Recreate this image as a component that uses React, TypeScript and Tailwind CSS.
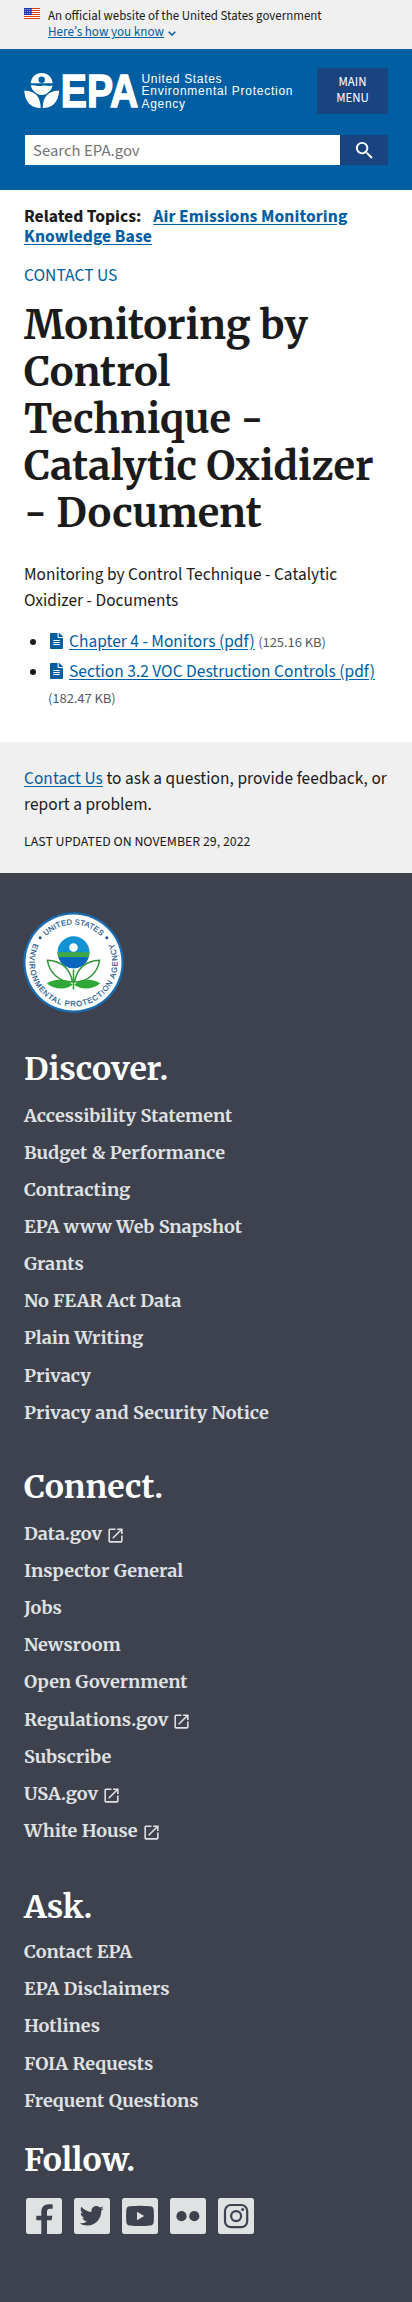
import React from "react";
import { FaFileAlt, FaTwitter } from "react-icons/fa";
import { MdOpenInNew, MdSearch } from "react-icons/md";

type FooterLink = { label: string; external?: boolean };

const discover: FooterLink[] = [
  { label: "Accessibility Statement" },
  { label: "Budget & Performance" },
  { label: "Contracting" },
  { label: "EPA www Web Snapshot" },
  { label: "Grants" },
  { label: "No FEAR Act Data" },
  { label: "Plain Writing" },
  { label: "Privacy" },
  { label: "Privacy and Security Notice" },
];

const connect: FooterLink[] = [
  { label: "Data.gov", external: true },
  { label: "Inspector General" },
  { label: "Jobs" },
  { label: "Newsroom" },
  { label: "Open Government" },
  { label: "Regulations.gov", external: true },
  { label: "Subscribe" },
  { label: "USA.gov", external: true },
  { label: "White House", external: true },
];

const ask: FooterLink[] = [
  { label: "Contact EPA" },
  { label: "EPA Disclaimers" },
  { label: "Hotlines" },
  { label: "FOIA Requests" },
  { label: "Frequent Questions" },
];

function Flag() {
  const stripes = [0, 2, 4, 6, 8, 10];
  const stars = [1.2, 3.2, 5.2, 7.2];
  return (
    <svg className="h-[11px] w-4 shrink-0" viewBox="0 0 16 11">
      <rect width="16" height="11" fill="#fff" />
      {stripes.map((y) => (
        <rect key={y} y={y} width="16" height="1" fill="#db3e1f" />
      ))}
      <rect width="8" height="7" fill="#1e33b1" />
      {stars.map((x) => (
        <g key={x} fill="#fff">
          <rect x={x - 0.4} y="1" width="0.8" height="0.8" />
          <rect x={x - 0.4} y="3" width="0.8" height="0.8" />
          <rect x={x - 0.4} y="5" width="0.8" height="0.8" />
        </g>
      ))}
    </svg>
  );
}

function Logo() {
  return (
    <svg className="mt-5 h-[42px] w-[272px] overflow-visible" viewBox="0 0 272 42" fill="#fff">
      <path
        fillRule="evenodd"
        d="M6.700 14.300C7.200 8 12 4 17.700 4s10.500 4 11 10.300zM17.700 7.600a3.200 3.200 0 1 0 0 6.400 3.200 3.200 0 0 0 0-6.400z"
      />
      <path d="M6.900 16.500c3.600-.9 7.200 1.300 10.800.4 3.600-.9 7.200.8 10.800-.4-.8 4.500-5 9.500-10.800 9.500S7.700 21 6.900 16.500z" />
      <path d="M-.4 20.800c9.500 0 17.800 4.500 17.700 18.800C7.500 40 .1 34.500-.4 20.800z" stroke="#005ea2" strokeWidth="1.200" />
      <path d="M35.800 20.800c-9.500 0-17.800 4.500-17.700 18.800C27.900 40 35.300 34.500 35.800 20.800z" stroke="#005ea2" strokeWidth="1.200" />
      <text
        x="36.800"
        y="38.200"
        className="font-['Liberation_Sans',Arial,sans-serif] font-bold"
        fontSize="47"
        textLength="77.500"
        lengthAdjust="spacingAndGlyphs"
        stroke="#fff"
        strokeWidth="1.500"
      >
        EPA
      </text>
      <g className="font-['Liberation_Sans',Arial,sans-serif]" fontSize="12">
        <text x="117.500" y="13.500" textLength="80">United States</text>
        <text x="117.500" y="26.200" textLength="151">Environmental Protection</text>
        <text x="117.500" y="38.900" textLength="43.500">Agency</text>
      </g>
    </svg>
  );
}

function Seal() {
  return (
    <svg className="h-[103px] w-[103px]" viewBox="0 0 103 103">
      <defs>
        <path id="seal-top" d="M13.500 51.500a38 38 0 0 1 76 0" />
        <path id="seal-bottom" d="M11.900 32.200A44 44 0 1 0 91.100 32.200" />
      </defs>
      <circle cx="51.500" cy="51.500" r="50.300" fill="#1a6cb0" />
      <circle cx="51.500" cy="51.500" r="48" fill="#fff" />
      <g className="font-['Liberation_Sans',Arial,sans-serif]" fontSize="7.600" fill="#1b5690" stroke="#1b5690" strokeWidth=".2">
        <text textAnchor="middle" textLength="61">
          <textPath href="#seal-top" startOffset="50%" textLength="61">UNITED STATES</textPath>
        </text>
        <text textAnchor="middle" textLength="177">
          <textPath href="#seal-bottom" startOffset="50%" textLength="177">ENVIRONMENTAL PROTECTION AGENCY</textPath>
        </text>
      </g>
      <circle cx="18.200" cy="26.800" r="1.500" fill="#1b5690" />
      <circle cx="84.800" cy="26.800" r="1.500" fill="#1b5690" />
      <circle cx="51.500" cy="41.200" r="16" fill="#1192d3" />
      <path d="M35.500 41.200h32a16 16 0 0 1-.8 5H36.300a16 16 0 0 1-.8-5z" fill="#41a843" />
      <path d="M36.300 46.200h30.400a16 16 0 0 1-30.400 0z" fill="#0a66bd" />
      <circle cx="51.500" cy="36.500" r="4.300" fill="#fff" />
      <g fill="#fff" stroke="#35943b" strokeWidth="1.500">
        <path d="M25.400 49.300c11 .5 22 6 25.200 21.700C36 71 27.500 61 25.400 49.300z" />
        <path d="M77.600 49.300c-11 .5-22 6-25.200 21.700C67 71 75.500 61 77.600 49.300z" />
      </g>
      <g fill="#2ea836">
        <path d="M24.800 72.500c8-5.500 20-4.500 26 1.200-6 5-18 5.500-26-1.200z" />
        <path d="M78.200 72.500c-8-5.500-20-4.500-26 1.200 6 5 18 5.500 26-1.200z" />
        <path d="M50.700 58.500h1.600v20h-1.600z" />
      </g>
    </svg>
  );
}

function SocialTile({ children }: { children: React.ReactNode }) {
  return (
    <svg className="size-9" viewBox="0 0 36 36" fill="#3e424f">
      <rect width="36" height="36" rx="2.500" fill="#dfe2e2" />
      {children}
    </svg>
  );
}

function FileLink({ children, size }: { children: string; size: string }) {
  return (
    <>
      <FaFileAlt className="mr-[6px] ml-[2px] inline-block h-4 w-[13px] align-[-2px] text-[#005ea2]" preserveAspectRatio="none" />
      <a className="text-[17.400px] leading-none text-[#005ea2] underline underline-offset-2">{children}</a>{" "}
      <span className="text-[14.600px] leading-none tracking-[-0.1px] text-[#565c65]">{size}</span>
    </>
  );
}

function FooterHeading({ children }: { children: string }) {
  return <h2 className="h-[47px] font-[Merriweather,'DejaVu_Serif_Condensed',serif] text-[32px] leading-[38px] font-bold text-white">{children}</h2>;
}

function FooterList({ links }: { links: FooterLink[] }) {
  return (
    <ul className="font-[Merriweather,'DejaVu_Serif_Condensed',serif] text-[18.070px] font-bold text-[#dfe1e2]">
      {links.map((link) => (
        <li key={link.label} className="flex h-[37.150px] items-center">
          {link.label}
          {link.external && <MdOpenInNew className="mt-[3px] ml-1 size-[19px]" />}
        </li>
      ))}
    </ul>
  );
}

export default function App() {
  return (
    <div className="min-h-[2302px] w-full bg-white font-['Source_Sans_3','Noto_Sans_CJK_SC',sans-serif] text-[17.300px] leading-[26px] text-[#1b1b1b]">
      <div className="flex h-[49px] gap-2 bg-[#f0f0f0] px-6 pt-2 text-[12.900px] leading-4">
        <Flag />
        <div>
          <p>An official website of the United States government</p>
          <p className="flex items-center text-[#005ea2]">
            <a className="text-[13.100px] underline underline-offset-1">Here’s how you know</a>
            <svg className="mt-[3px] ml-1 h-[5px] w-2" viewBox="0 0 8 5" fill="none" stroke="#005ea2" strokeWidth="1.500">
              <path d="M.7.7 4 4 7.300.7" />
            </svg>
          </p>
        </div>
      </div>

      <header className="h-[141px] bg-[#005ea2] px-6">
        <div className="flex h-[86px] items-start justify-between">
          <Logo />
          <button className="mt-[19px] h-[46px] w-[71px] bg-[#1a4480] pb-0.5 text-[12.800px] leading-4 text-white">
            MAIN
            <br />
            MENU
          </button>
        </div>
        <div className="flex h-[30px]">
          <div className="ml-px flex w-[315px] items-center bg-white pt-px pl-2 text-[16.700px] text-[#757575]">Search EPA.gov</div>
          <button className="flex flex-1 items-center justify-center bg-[#1a4480] text-white">
            <MdSearch className="size-[23px]" />
          </button>
        </div>
      </header>

      <main className="h-[552px] px-6 pt-[17px]">
        <p className="text-[17.600px] leading-5 font-bold">
          Related Topics:
          <a className="ml-3 tracking-[0.080px] text-[#005ea2] underline underline-offset-2">
            Air Emissions Monitoring
            <br />
            Knowledge Base
          </a>
        </p>
        <p className="mt-4 text-[17.500px] text-[#005ea2]">CONTACT US</p>
        <h1 className="mt-[13px] font-[Merriweather,'DejaVu_Serif_Condensed',serif] text-[39.800px] leading-[47px] font-bold">
          Monitoring by
          <br />
          Control
          <br />
          Technique -
          <br />
          Catalytic Oxidizer
          <br />- Document
        </h1>
        <p className="mt-[25px] tracking-[0.040px]">
          Monitoring by Control Technique - Catalytic
          <br />
          Oxidizer - Documents
        </p>
        <ul className="mt-[15px] flex flex-col gap-1">
          <li className="flex">
            <span className="mt-[10px] mr-3 ml-[6px] size-[6px] shrink-0 rounded-full bg-[#1b1b1b]" />
            <div>
              <FileLink size="(125.16 KB)">Chapter 4 - Monitors (pdf)</FileLink>
            </div>
          </li>
          <li className="flex">
            <span className="mt-[10px] mr-3 ml-[6px] size-[6px] shrink-0 rounded-full bg-[#1b1b1b]" />
            <div>
              <FileLink size="(182.47 KB)">Section 3.2 VOC Destruction Controls (pdf)</FileLink>
            </div>
          </li>
        </ul>
      </main>

      <section className="h-[131px] bg-[#f0f0f0] px-6 pt-6">
        <p className="tracking-[0.070px]">
          <a className="text-[#005ea2] underline underline-offset-2">Contact Us</a> to ask a question, provide feedback, or
          <br />
          report a problem.
        </p>
        <p className="mt-[14px] text-[13.850px] leading-5">LAST UPDATED ON NOVEMBER 29, 2022</p>
      </section>

      <footer className="h-[1429px] bg-[#3e424f] px-6 pt-[38px]">
        <div className="-ml-0.5 mb-9">
          <Seal />
        </div>
        <FooterHeading>Discover.</FooterHeading>
        <FooterList links={discover} />
        <div className="mt-[37px]">
          <FooterHeading>Connect.</FooterHeading>
          <FooterList links={connect} />
        </div>
        <div className="mt-[38px]">
          <FooterHeading>Ask.</FooterHeading>
          <div className="-mt-px">
            <FooterList links={ask} />
          </div>
        </div>
        <div className="mt-[22px]">
          <FooterHeading>Follow.</FooterHeading>
          <div className="mt-[10px] ml-0.5 flex gap-3">
            <SocialTile>
              <path d="M15.300 36V22.300h-5v-4.600h5v-3.800c0-5 3-7.700 7.500-7.700 1.500 0 2.700.1 3.900.3v4.200h-2.500c-2.400 0-3.200 1.300-3.200 3v4h5.400l-.8 4.600H21V36z" />
            </SocialTile>
            <SocialTile>
              <g transform="translate(5.700 5.700)">
                <FaTwitter size={24} className="text-[#3e424f]" />
              </g>
            </SocialTile>
            <SocialTile>
              <path d="M8 8.200Q18 7.200 28 8.200c2.600.2 3.500 1.400 3.700 4 .3 4 .3 7.600 0 11.500-.2 2.600-1.100 3.700-3.700 3.900Q18 28.600 8 27.600c-2.600-.2-3.500-1.300-3.700-3.900-.3-3.900-.3-7.500 0-11.500.2-2.600 1.100-3.800 3.700-4z" />
              <path d="M15 13.700v8.600l7.200-4.300z" fill="#dfe2e2" />
            </SocialTile>
            <SocialTile>
              <circle cx="11.500" cy="18.200" r="5.100" />
              <circle cx="24.300" cy="18.200" r="5.100" />
            </SocialTile>
            <SocialTile>
              <rect x="7" y="7" width="22.200" height="22.200" rx="6" fill="none" stroke="#3e424f" strokeWidth="2.200" />
              <circle cx="18.100" cy="18.100" r="5" fill="none" stroke="#3e424f" strokeWidth="2.200" />
              <circle cx="24.600" cy="11.500" r="1.500" />
            </SocialTile>
          </div>
        </div>
      </footer>
    </div>
  );
}
